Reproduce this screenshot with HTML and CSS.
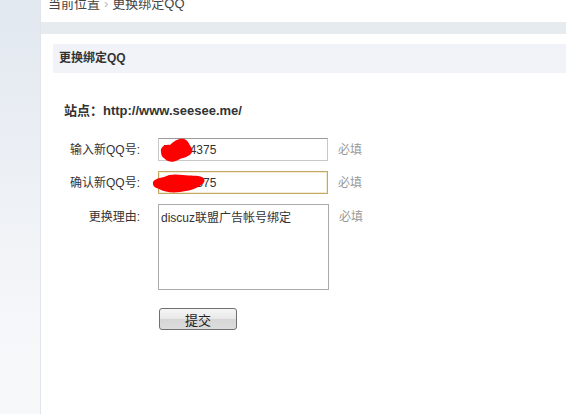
FILE: index.html
```html
<!DOCTYPE html>
<html lang="zh-CN">
<head>
  <meta charset="UTF-8" />
  <title>更换绑定QQ</title>
  <link rel="stylesheet" href="styles.css">
</head>
<body>
  <div class="sidebar"></div>

  <div class="main">
    <div class="crumbs">
      <span class="crumbs-text">当前位置<span class="sep">›</span>更换绑定QQ</span>
    </div>
    <div class="strip"></div>

    <div class="panel">
      <div class="panel-title">更换绑定QQ</div>

      <div class="site">站点：http://www.seesee.me/</div>

      <div class="row">
        <label class="label">输入新QQ号:</label>
        <div class="field">
          <input class="text" type="text" value="51524375" />
          <svg class="blot blot-one" width="36" height="25" viewBox="0 0 36 25">
            <path d="M2 14 C1 9 6 6 11 7 C15 3 20 0 25 1 C29 2 30 6 32 9 C35 12 33 16 29 18 C26 20 22 20 19 22 C14 25 9 24 6 21 C3 19 2 17 2 14 Z" fill="#ff0000"/>
          </svg>
        </div>
        <span class="hint">必填</span>
      </div>

      <div class="row">
        <label class="label">确认新QQ号:</label>
        <div class="field">
          <input class="text focus" type="text" value="51524375" />
          <svg class="blot blot-two" width="54" height="20" viewBox="0 0 54 20">
            <path d="M1 11 C0 7 6 5 12 4 C17 1 24 1 31 2 C38 3 46 2 50 4 C54 6 53 10 49 12 C44 16 36 18 28 19 C20 20 12 19 7 16 C3 15 1 13 1 11 Z" fill="#ff0000"/>
          </svg>
        </div>
        <span class="hint">必填</span>
      </div>

      <div class="row top">
        <label class="label">更换理由:</label>
        <textarea class="area">discuz联盟广告帐号绑定</textarea>
        <span class="hint">必填</span>
      </div>

      <div class="actions">
        <button class="btn" type="button">提交</button>
      </div>
    </div>
  </div>
</body>
</html>
```

FILE: styles.css
```css
html, body {
  margin: 0;
  padding: 0;
  height: 100%;
  overflow: hidden;
  font-family: 'Liberation Sans', 'Noto Sans CJK SC', sans-serif;
  font-size: 12px;
  color: #333;
  background: #fff;
}

body {
  display: flex;
}

.sidebar {
  width: 40px;
  flex-shrink: 0;
  background: linear-gradient(to bottom, #e2e8f0, #f7f8fa 85%);
  border-right: 1px solid #e1e5eb;
}

.main {
  flex: 1;
  display: flex;
  flex-direction: column;
}

.crumbs {
  height: 22px;
  overflow: hidden;
  padding-left: 7px;
  background: #fff;
}

.crumbs-text {
  display: block;
  margin-top: -4px;
  line-height: 16px;
  font-size: 13px;
  color: #444;
}

.sep {
  color: #bbb;
  margin: 0 4px;
}

.strip {
  height: 12px;
  background: #e6ebef;
}

.panel {
  flex: 1;
  background: #fff;
  padding: 10px 0 0 12px;
}

.panel-title {
  height: 29px;
  line-height: 29px;
  padding-left: 6px;
  background: #f2f3f8;
  font-weight: bold;
  font-size: 12px;
  color: #333;
}

.site {
  margin-top: 30px;
  margin-left: 11px;
  line-height: 16px;
  font-weight: bold;
  font-size: 13px;
  color: #333;
}

.row {
  display: flex;
  align-items: center;
  margin-top: 10px;
}

.site + .row {
  margin-top: 19px;
}

.row.top {
  align-items: flex-start;
}

.label {
  width: 87px;
  text-align: right;
  line-height: 16px;
  color: #333;
}

.row.top .label,
.row.top .hint {
  margin-top: 5px;
}

.field {
  position: relative;
  margin-left: 18px;
}

.text {
  display: block;
  box-sizing: border-box;
  width: 170px;
  height: 23px;
  margin: 0;
  padding: 0 0 0 4px;
  border: 1px solid #c9c9c9;
  border-top-color: #9a9a9a;
  font-family: inherit;
  font-size: 12px;
  color: #333;
  outline: none;
}

.text.focus {
  border: 1px solid #c3a865;
  box-shadow: inset 0 0 0 1px #f3ecd2;
}

.blot {
  position: absolute;
  display: block;
}

.blot-one {
  left: 1px;
  top: 0;
}

.blot-two {
  left: -6px;
  top: 2px;
}

.area {
  display: block;
  box-sizing: border-box;
  width: 171px;
  height: 86px;
  margin: 0 0 0 18px;
  padding: 5px 2px;
  border: 1px solid #aaa;
  font-family: inherit;
  font-size: 12px;
  line-height: 16px;
  color: #333;
  resize: none;
  outline: none;
}

.hint {
  margin-left: 10px;
  line-height: 16px;
  color: #999;
}

.actions {
  margin-top: 18px;
  padding-left: 106px;
}

.btn {
  width: 78px;
  height: 22px;
  padding: 0;
  border: 1px solid #707070;
  border-radius: 3px;
  background: linear-gradient(to bottom, #f5f5f5, #e8e8e8 50%, #d6d6d6 51%, #dcdcdc);
  font-family: inherit;
  font-size: 13px;
  color: #222;
  cursor: pointer;
}
```
